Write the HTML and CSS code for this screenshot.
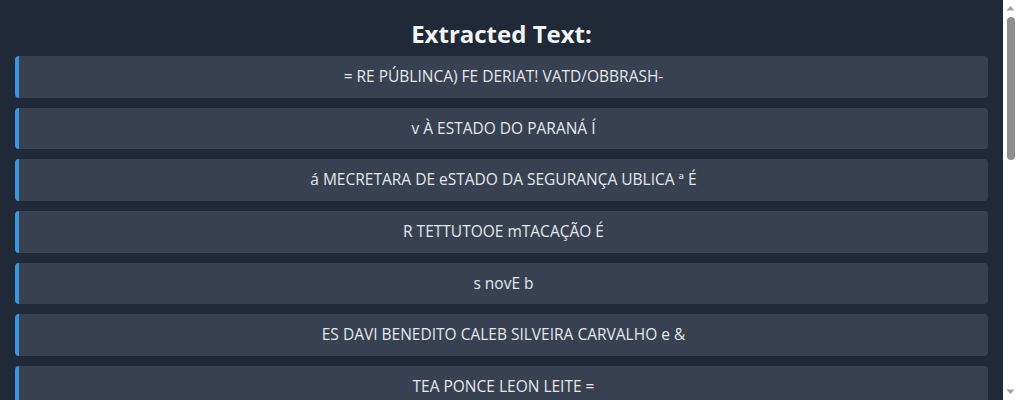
FILE: index.html
```html
<!DOCTYPE html>
<html lang="pt">
<head>
<meta charset="utf-8">
<title>Extracted Text</title>
<link rel="stylesheet" href="styles.css">
</head>
<body>
<div class="window">
  <main class="page">
    <h1 class="title">Extracted Text:</h1>
    <ul class="lines">
      <li class="line">= RE PÚBLINCA) FE DERIAT! VATD/OBBRASH-</li>
      <li class="line">v À ESTADO DO PARANÁ Í</li>
      <li class="line">á MECRETARA DE eSTADO DA SEGURANÇA UBLICA ª É</li>
      <li class="line">R TETTUTOOE mTACAÇÃO É</li>
      <li class="line">s novE b</li>
      <li class="line">ES DAVI BENEDITO CALEB SILVEIRA CARVALHO e &amp;</li>
      <li class="line">TEA PONCE LEON LEITE =</li>
    </ul>
  </main>
  <div class="scrollbar" aria-hidden="true">
    <div class="sb-btn">
      <svg width="15" height="17" viewBox="0 0 15 17"><path d="M3.5 10.5 L7.5 6 L11.5 10.5 Z" fill="#a3a3a3"/></svg>
    </div>
    <div class="sb-track">
      <div class="sb-thumb"></div>
    </div>
    <div class="sb-btn">
      <svg width="15" height="17" viewBox="0 0 15 17"><path d="M3.5 6.5 L11.5 6.5 L7.5 11 Z" fill="#a3a3a3"/></svg>
    </div>
  </div>
</div>
</body>
</html>
```
FILE: styles.css
```css
html, body {
  margin: 0;
  padding: 0;
  background: #1f2937;
}

body {
  font-family: "Open Sans", "Noto Sans", "Liberation Sans", sans-serif;
  color: #e5e7eb;
}

.window {
  display: flex;
  height: 100vh;
  overflow: hidden;
}

.page {
  flex: 1;
  min-width: 0;
  padding: 0 15px;
  overflow: hidden;
}

.title {
  margin: 0;
  padding: 18px 0 6px;
  text-align: center;
  font-size: 24px;
  line-height: 32px;
  font-weight: 700;
  color: #f3f4f6;
}

.lines {
  list-style: none;
  margin: 0;
  padding: 0;
  display: flex;
  flex-direction: column;
  gap: 10px;
}

.line {
  background: #374151;
  border-left: 4px solid #3498db;
  border-radius: 4px;
  padding: 10px 12px;
  text-align: center;
  font-size: 15.5px;
  line-height: 21.67px;
}

.scrollbar {
  width: 15px;
  flex: none;
  background: #ffffff;
  display: flex;
  flex-direction: column;
}

.sb-btn {
  height: 17px;
  flex: none;
  display: flex;
}

.sb-track {
  flex: 1;
  display: flex;
  flex-direction: column;
  align-items: center;
}

.sb-thumb {
  width: 8px;
  height: 143px;
  border-radius: 4px;
  background: #8f8f8f;
}
```
